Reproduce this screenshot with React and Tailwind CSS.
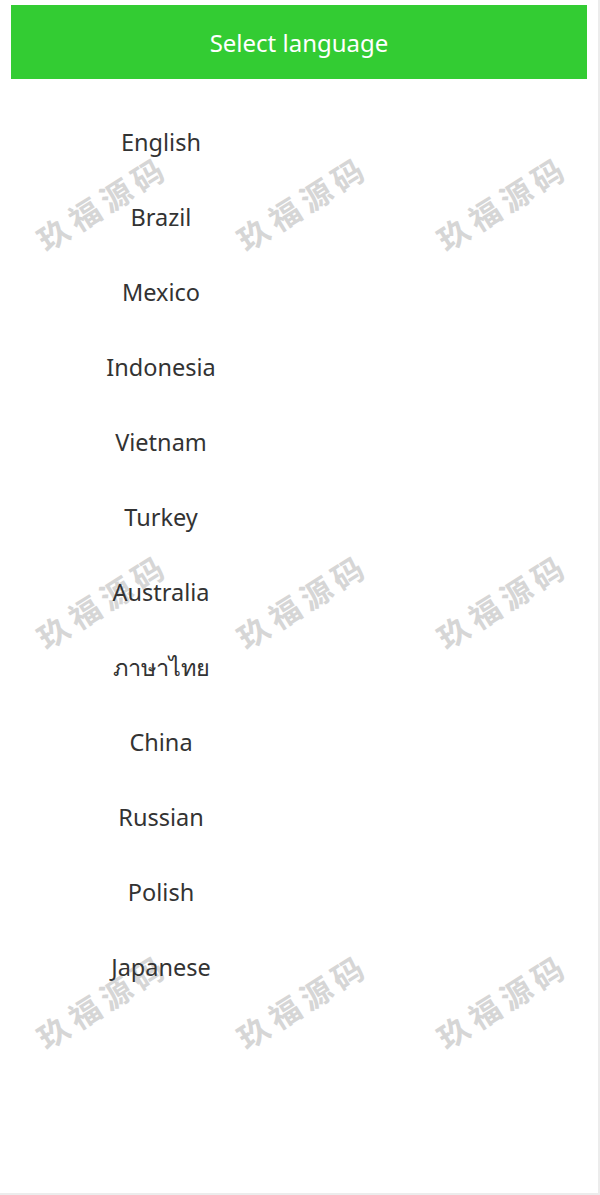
import React from "react";

const langs = [
  "English",
  "Brazil",
  "Mexico",
  "Indonesia",
  "Vietnam",
  "Turkey",
  "Australia",
  "ภาษาไทย",
  "China",
  "Russian",
  "Polish",
  "Japanese",
];

const marks = [
  [102, 202], [302, 202], [502, 202],
  [102, 600], [302, 600], [502, 600],
  [102, 1000], [302, 1000], [502, 1000],
];

export default function App() {
  return (
    <div
      className="relative w-[600px] h-[1195px] bg-[#ececec] overflow-hidden"
      style={{ fontFamily: '"Noto Sans", "Open Sans", "Noto Sans CJK SC", sans-serif' }}
    >
      <div className="relative w-[598px] h-[1193px] bg-white">
        {marks.map(([x, y], i) => (
          <div
            key={i}
            className="absolute pointer-events-none select-none font-bold text-[31px] text-[#d6d6d6] tracking-[6px] whitespace-nowrap leading-none"
            style={{
              left: x,
              top: y,
              transform: "translate(-50%, -50%) rotate(-32deg)",
              fontFamily: '"Noto Sans CJK SC", sans-serif',
            }}
          >
            玖福源码
          </div>
        ))}
        <div className="relative mx-[11px] pt-[5px]">
          <div className="h-[74px] pt-[1px] bg-[#33cc33] flex items-center justify-center text-white text-[24px]">
            Select language
          </div>
        </div>
        <div className="relative pt-[26px] w-[322px]">
          {langs.map((l) => (
            <div key={l} className="h-[75px] flex items-center justify-center text-[23.5px] text-[#333333]">
              {l}
            </div>
          ))}
        </div>
      </div>
    </div>
  );
}
